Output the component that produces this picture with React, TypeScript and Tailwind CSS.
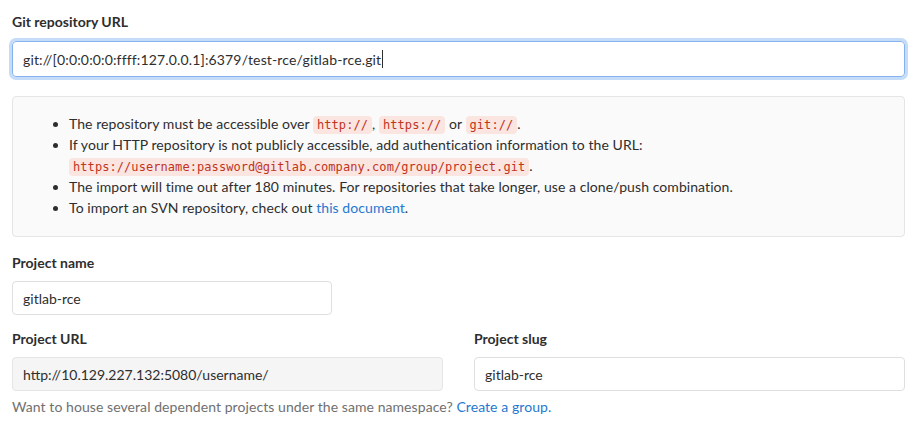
const code =
  "rounded-[4px] bg-[#fbe5e1] px-1 py-[2px] text-[12px] leading-[14px] text-[#c0341d] [font-family:'DejaVu_Sans_Mono',monospace]";

function Label({ children }: { children: React.ReactNode }) {
  return (
    <label className="mb-2 block text-[14px] font-bold leading-5 text-[#2e2e2e]">
      {children}
    </label>
  );
}

export default function App() {
  return (
    <div className="min-h-[427px] bg-white px-3 pt-3 text-[14px] text-[#2e2e2e] [font-family:Lato,'Noto_Sans',sans-serif]">
      <Label>Git repository URL</Label>
      <div className="mt-[9px] flex h-9 items-center rounded-[4px] border border-[#86b3ee] px-[10px] tracking-[0.15px] shadow-[0_0_0_3px_#c4dcf8]">
        <span>git://[0:0:0:0:0:ffff:127.0.0.1]:6379/test-rce/gitlab-rce.git</span>
        <span className="ml-px h-[18px] w-px bg-[#2e2e2e]" />
      </div>

      <div className="mt-[19px] rounded-[4px] border border-[#e5e5e5] bg-[#fafafa] px-4 pt-4 pb-[18px]">
        <ul className="list-disc pl-10 leading-[21px] tracking-[0.07px]">
          <li>
            The repository must be accessible over <code className={code}>http://</code>,{" "}
            <code className={code}>https://</code> or <code className={code}>git://</code>.
          </li>
          <li>
            If your HTTP repository is not publicly accessible, add authentication information to the URL:{" "}
            <code className={code}>https://username:password@gitlab.company.com/group/project.git</code>.
          </li>
          <li>
            The import will time out after 180 minutes. For repositories that take longer, use a clone/push combination.
          </li>
          <li>
            To import an SVN repository, check out{" "}
            <a className="text-[#1f78d1]">this document</a>.
          </li>
        </ul>
      </div>

      <div className="mt-4">
        <Label>Project name</Label>
        <div className="flex h-[34px] w-[320px] items-center rounded-[4px] border border-[#dfdfdf] bg-white px-[10px]">
          gitlab-rce
        </div>
      </div>

      <div className="mt-[14px] grid grid-cols-2 gap-[31px]">
        <div>
          <Label>Project URL</Label>
          <div className="flex h-[34px] items-center rounded-[4px] border border-[#e5e5e5] bg-[#f5f5f5] px-[10px]">
            http://10.129.227.132:5080/username/
          </div>
        </div>
        <div>
          <Label>Project slug</Label>
          <div className="flex h-[34px] items-center rounded-[4px] border border-[#dfdfdf] bg-white px-[10px]">
            gitlab-rce
          </div>
        </div>
      </div>

      <p className="mt-[5px] tracking-[0.07px] text-[#707070]">
        Want to house several dependent projects under the same namespace?{" "}
        <a className="text-[#1f78d1]">Create a group.</a>
      </p>
    </div>
  );
}
